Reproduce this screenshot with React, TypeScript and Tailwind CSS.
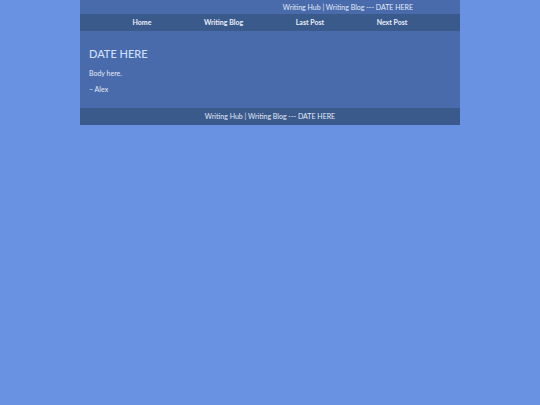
export default function App() {
  return (
    <div className="min-h-[405px] w-full bg-[#6a92e2]" style={{ fontFamily: "Lato, 'Open Sans', sans-serif" }}>
      <div className="mx-auto w-[380px] bg-[#4a6bab]">
        <div className="flex h-[14px] items-center justify-end pr-[47px] text-[7px] text-[#e3eaf8]">
          Writing Hub | Writing Blog --- DATE HERE
        </div>
        <nav className="flex h-[17px] items-center justify-evenly bg-[#3b5a8c] text-[7px] font-bold text-[#e8eefa]">
          <span>Home</span>
          <span>Writing Blog</span>
          <span>Last Post</span>
          <span>Next Post</span>
        </nav>
        <main className="px-[9px] pt-[17px] pb-[15px]">
          <h1 className="text-[11px] font-medium leading-none text-[#cfe0ff]">DATE HERE</h1>
          <p className="mt-[11px] text-[7px] leading-none text-[#e3eaf8]">Body here.</p>
          <p className="mt-[9px] text-[7px] leading-none text-[#e3eaf8]">– Alex</p>
        </main>
        <footer className="flex h-[17px] items-center justify-center bg-[#3b5a8c] text-[7px] text-[#e3eaf8]">
          Writing Hub | Writing Blog --- DATE HERE
        </footer>
      </div>
    </div>
  );
}
